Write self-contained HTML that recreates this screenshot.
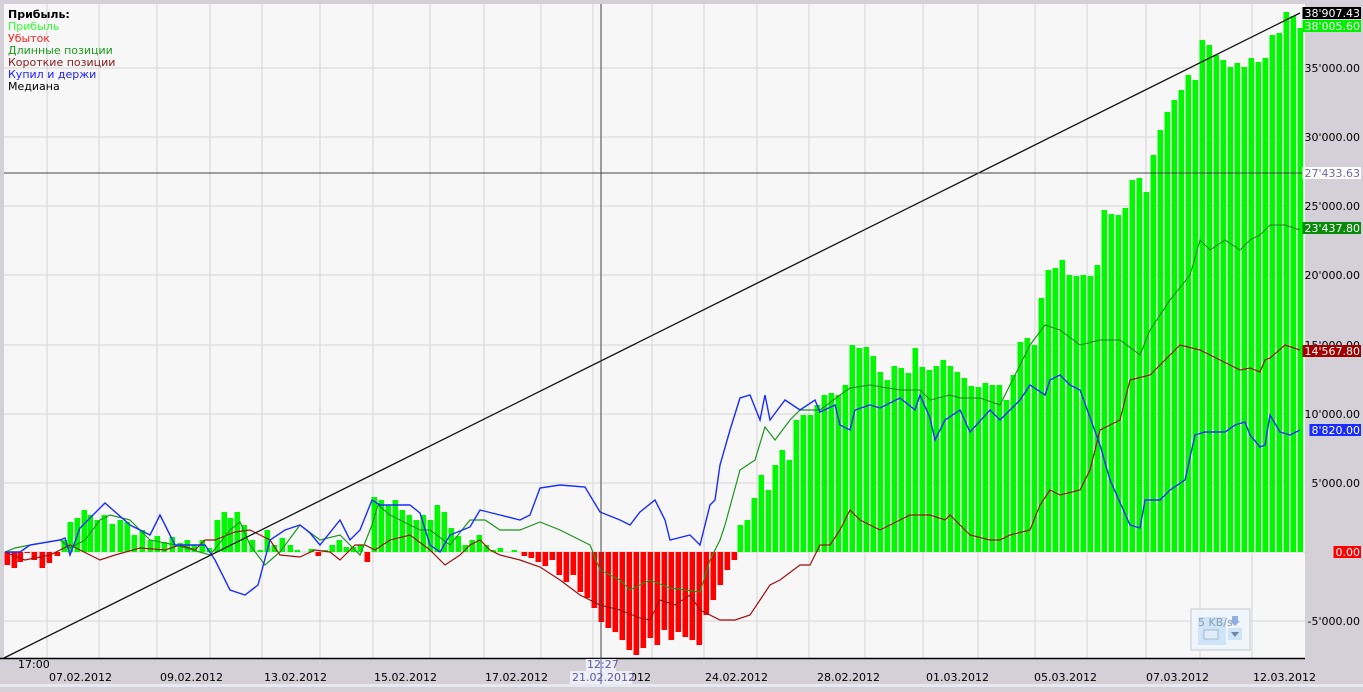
<!DOCTYPE html>
<html><head><meta charset="utf-8"><style>
html,body{margin:0;padding:0;background:#d4d0d8;}
body{width:1363px;height:687px;overflow:hidden;font-family:"Liberation Sans",Tahoma,sans-serif;}
svg text{font-family:"DejaVu Sans","Liberation Sans",sans-serif;font-size:11px;}
</style></head><body>
<svg id="s" width="1363" height="687" xmlns="http://www.w3.org/2000/svg">
<rect x="0" y="0" width="1363" height="687" fill="#d4d0d8"/>
<rect x="4" y="4" width="1301" height="654" fill="#f7f7f7"/>
<g id="grid" stroke="#d6d6d6" stroke-width="1"></g>
<g id="bars"></g>
<polyline id="red" fill="none" stroke="#a01010" stroke-width="1.2"/>
<polyline id="grn" fill="none" stroke="#1c961c" stroke-width="1.2"/>
<polyline id="blu" fill="none" stroke="#1a2cff" stroke-width="1.4"/>
<line x1="4" y1="658" x2="1300" y2="13" stroke="#111" stroke-width="1.3"/>
<line x1="601" y1="4" x2="601" y2="658" stroke="#444" stroke-width="1"/>
<line x1="4" y1="173" x2="1305" y2="173" stroke="#444" stroke-width="1"/>
<line x1="0" y1="658.5" x2="1305" y2="658.5" stroke="#000" stroke-width="1.5"/>
<g font-size="11">
<text x="8" y="18" font-weight="bold" fill="#000">Прибыль:</text>
<text x="8" y="30" fill="#33ff33">Прибыль</text>
<text x="8" y="42" fill="#ff2020">Убыток</text>
<text x="8" y="54" fill="#1e9a1e">Длинные позиции</text>
<text x="8" y="66" fill="#8b1a1a">Короткие позиции</text>
<text x="8" y="78" fill="#2020ff">Купил и держи</text>
<text x="8" y="90" fill="#000">Медиана</text>
</g>
<g id="ylab"></g>
<g font-size="11" fill="#000">
<text x="18" y="668">17:00</text>
<text x="49" y="681">07.02.2012</text>
<text x="160" y="681">09.02.2012</text>
<text x="264" y="681">13.02.2012</text>
<text x="374" y="681">15.02.2012</text>
<text x="485" y="681">17.02.2012</text>
<text x="623" y="681">2012</text>
<text x="705" y="681">24.02.2012</text>
<text x="817" y="681">28.02.2012</text>
<text x="926" y="681">01.03.2012</text>
<text x="1034" y="681">05.03.2012</text>
<text x="1146" y="681">07.03.2012</text>
<text x="1253" y="681">12.03.2012</text>
<rect x="586" y="659" width="30" height="12" fill="#eeeef4"/>
<text x="587" y="668" fill="#5a5aa0">12:27</text>
<rect x="570" y="671" width="62" height="13" fill="#eeeef4"/>
<text x="572" y="681" fill="#5a5aa0">21.02.2012</text>
</g>
<line x1="601" y1="658" x2="601" y2="687" stroke="#6060b0"/>
<rect x="0" y="684" width="1363" height="3" fill="#e8e8f0"/>
<g>
<rect x="1191" y="609" width="59" height="41" fill="#f0f4fb" stroke="#c8c8d0"/>
<rect x="1198" y="617" width="28" height="28" fill="#cfe4f8"/>
<text x="1198" y="626" font-size="9" fill="#8a9ab0">5 KB/s</text>
<rect x="1228" y="628" width="14" height="12" fill="#cfe4f8"/>
<path d="M1231 632 L1239 632 L1235 637 Z" fill="#6d86a6"/>
<path d="M1232 616 h6 v5 h2 l-5 5 l-5 -5 h2 Z" fill="#8fb0e0"/>
<rect x="1204" y="630" width="14" height="9" fill="#e0ecf8" stroke="#a0b8d0"/>
</g>
</svg>
<script>
var NS="http://www.w3.org/2000/svg";
function el(t,a,p){var e=document.createElementNS(NS,t);for(var k in a)e.setAttribute(k,a[k]);if(p)p.appendChild(e);return e;}
var g=document.getElementById('grid');
[47,99,157,210,262,320,373,430,484,541,593,652,704,757,809,865,923,978,1035,1087,1146,1200,1252].forEach(function(x){el('line',{x1:x,y1:4,x2:x,y2:658},g);});
[68,137,206,275,345,414,483,552,621].forEach(function(y){el('line',{x1:4,y1:y,x2:1305,y2:y},g);});
// bar profile
var P=[[5,565],[12,568],[18,562],[25,553],[32,560],[40,568],[47,563],[55,556],[62,540],[68,522],[75,518],[82,510],[88,515],[95,520],[102,515],[110,524],[118,520],[125,522],[132,535],[140,530],[148,540],[155,536],[162,542],[170,537],[178,543],[185,540],[192,545],[200,540],[207,548],[215,520],[222,512],[228,518],[235,512],[242,525],[250,540],[258,550],[265,530],[272,545],[280,538],[288,545],[295,550],[302,552],[309,549],[316,556],[323,550],[330,545],[337,540],[344,547],[351,547],[358,545],[365,562],[372,497],[379,500],[386,505],[393,500],[400,510],[407,515],[414,520],[421,515],[428,520],[435,505],[442,512],[449,528],[456,536],[463,545],[470,540],[477,535],[484,545],[491,550],[498,548],[505,552],[512,550],[519,552],[522,556],[529,558],[536,562],[543,566],[550,560],[557,575],[564,582],[571,575],[578,592],[585,598],[592,608],[599,622],[606,628],[613,632],[620,640],[627,650],[634,655],[641,648],[648,638],[655,645],[662,630],[669,640],[676,632],[683,637],[690,640],[697,645],[704,615],[711,600],[718,585],[725,570],[732,560],[738,525],[745,520],[752,498],[759,475],[766,490],[773,465],[780,450],[787,460],[794,420],[801,415],[808,415],[815,405],[822,395],[829,393],[836,395],[843,385],[850,345],[857,348],[864,347],[871,356],[878,372],[885,380],[892,366],[899,368],[906,373],[913,348],[920,367],[927,370],[934,366],[941,360],[948,366],[955,372],[962,378],[969,386],[976,387],[983,383],[990,385],[997,385],[1004,400],[1011,375],[1018,342],[1025,338],[1032,345],[1039,298],[1046,270],[1053,268],[1060,260],[1067,275],[1074,276],[1081,275],[1088,276],[1095,265],[1102,210],[1109,214],[1116,215],[1123,208],[1130,180],[1137,178],[1144,192],[1151,155],[1158,130],[1165,112],[1172,100],[1179,90],[1186,75],[1193,80],[1200,40],[1207,45],[1214,55],[1221,60],[1228,67],[1235,63],[1242,67],[1249,58],[1256,62],[1263,58],[1270,35],[1277,33],[1284,12],[1291,16],[1298,28]];
var b=document.getElementById('bars'),Z=552;
P.forEach(function(p){var x=p[0],y=p[1];if(Math.abs(y-Z)<1)return;
 if(y<Z)el('rect',{x:x-0.5,y:y,width:5.6,height:Z-y,fill:'#00f800'},b);
 else el('rect',{x:x-0.5,y:Z,width:5.6,height:y-Z,fill:'#ff0000'},b);});
function pl(id,a){document.getElementById(id).setAttribute('points',a.map(function(p){return p.join(',')}).join(' '));}
pl('blu',[[5,552],[20,552],[30,545],[60,540],[65,538],[70,555],[80,528],[105,503],[130,525],[150,535],[160,515],[175,545],[205,545],[215,560],[230,590],[245,595],[258,585],[270,540],[285,530],[300,525],[310,533],[320,545],[340,520],[350,540],[360,530],[372,500],[380,505],[410,505],[420,513],[430,545],[440,552],[450,535],[470,527],[480,510],[500,515],[520,520],[530,515],[540,488],[560,485],[585,487],[600,512],[620,520],[630,525],[640,512],[655,500],[665,520],[670,540],[690,535],[700,545],[710,505],[715,500],[720,465],[730,430],[740,398],[750,395],[760,420],[765,395],[770,420],[785,400],[800,410],[815,400],[820,412],[835,405],[840,425],[850,430],[855,410],[870,405],[880,408],[900,398],[915,410],[920,395],[930,418],[935,440],[945,420],[960,410],[970,432],[990,410],[1000,420],[1020,400],[1030,385],[1045,395],[1050,380],[1060,375],[1070,385],[1080,390],[1100,445],[1110,480],[1130,525],[1140,528],[1145,500],[1160,500],[1170,490],[1185,480],[1195,435],[1205,432],[1225,432],[1235,425],[1245,422],[1250,435],[1260,447],[1265,445],[1270,415],[1280,432],[1290,435],[1300,430]]);
pl('grn',[[5,552],[15,548],[30,545],[60,540],[70,548],[85,540],[100,520],[110,515],[130,520],[150,540],[175,545],[210,555],[230,530],[240,522],[250,545],[265,565],[280,552],[300,525],[320,540],[340,535],[360,555],[372,525],[378,505],[390,515],[420,530],[430,530],[450,545],[470,520],[485,520],[500,530],[520,530],[540,522],[560,530],[590,545],[600,570],[620,580],[630,590],[640,585],[650,580],[670,588],[700,592],[710,560],[720,540],[725,525],[740,470],[755,460],[765,427],[775,440],[790,420],[800,410],[820,410],[840,395],[850,388],[870,385],[900,390],[920,390],[930,400],[950,395],[960,398],[980,398],[1000,405],[1010,385],[1030,345],[1045,325],[1060,330],[1080,345],[1100,340],[1120,340],[1140,355],[1150,330],[1170,300],[1190,275],[1200,240],[1210,250],[1225,240],[1240,250],[1250,240],[1260,235],[1270,225],[1285,225],[1300,230]]);
pl('red',[[5,552],[25,560],[50,555],[60,550],[70,545],[80,550],[100,560],[115,555],[140,548],[165,550],[180,545],[195,550],[205,540],[215,540],[235,532],[250,530],[270,540],[280,555],[300,557],[315,550],[330,552],[340,560],[355,545],[365,545],[375,550],[390,540],[410,535],[430,550],[445,565],[460,555],[470,545],[480,540],[490,550],[500,555],[520,560],[540,567],[560,580],[580,595],[600,605],[620,610],[640,618],[650,620],[660,600],[675,605],[690,595],[700,610],[720,620],[735,620],[750,615],[770,585],[780,580],[800,565],[810,565],[820,545],[830,545],[840,530],[850,510],[860,520],[880,530],[900,520],[910,515],[930,515],[945,520],[950,515],[970,535],[990,540],[1000,540],[1010,535],[1030,530],[1040,505],[1050,490],[1060,495],[1080,490],[1090,470],[1100,430],[1120,420],[1130,380],[1150,375],[1170,355],[1180,345],[1200,350],[1220,360],[1240,370],[1250,368],[1260,372],[1265,360],[1270,358],[1285,345],[1300,350]]);
var yl=document.getElementById('ylab');
[["35'000.00",68],["30'000.00",137],["25'000.00",206],["20'000.00",275],["15'000.00",345],["10'000.00",414],["5'000.00",483],["-5'000.00",621]].forEach(function(a){var t=el('text',{x:1360,y:a[1]+4,'text-anchor':'end',fill:'#000'},yl);t.textContent=a[0];});
[["38'907.43",13,'#000','#fff'],["38'005.60",26,'#00f000','#fff'],["27'433.63",173,'#fff','#6a6aa8'],["23'437.80",228,'#0a8a0a','#fff'],["14'567.80",351,'#a00000','#fff'],["8'820.00",430,'#1a2cff','#fff'],["0.00",552,'#ff0000','#fff']].forEach(function(a){
 var t=el('text',{x:1360,y:a[1]+4,'text-anchor':'end',fill:a[3]},yl);t.textContent=a[0];
 var w=t.getComputedTextLength()+3;
 yl.insertBefore(el('rect',{x:1361-w,y:a[1]-6,width:w,height:12,fill:a[2]}),t);});
</script>
</body></html>
